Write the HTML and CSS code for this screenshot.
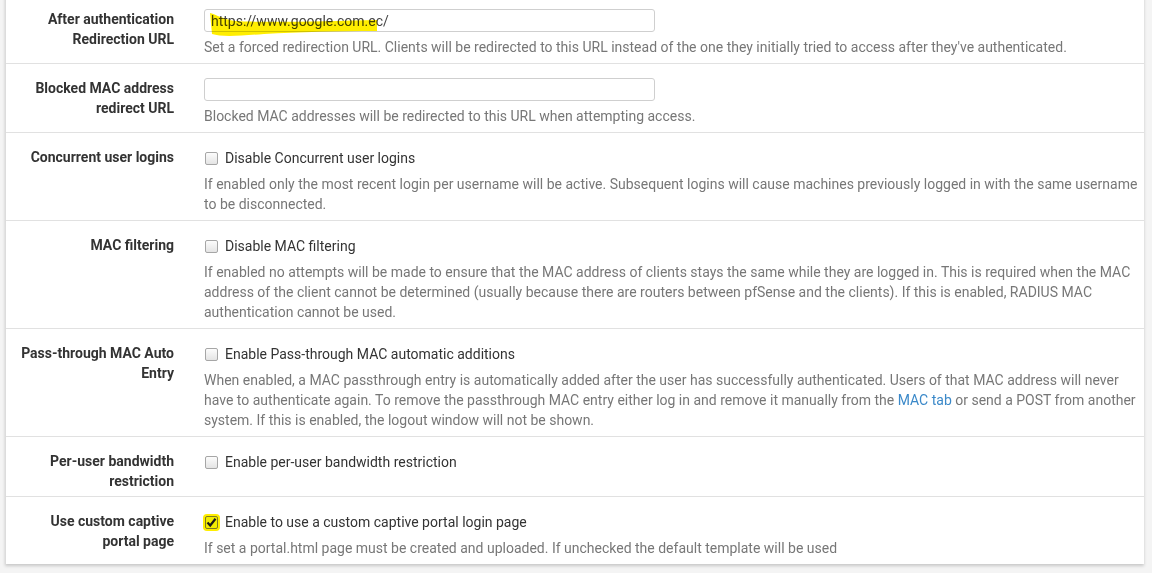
FILE: index.html
```html
<!DOCTYPE html>
<html lang="en">
<head>
<meta charset="utf-8">
<title>Captive Portal settings</title>
<link rel="stylesheet" href="styles.css">
</head>
<body>
<div class="panel">
  <div class="row">
    <div class="label">After authentication Redirection URL</div>
    <div class="control">
      <div class="input-wrap">
        <input class="text-input" type="text" value="https://www.google.com.ec/">
        <svg class="marker" width="180" height="30" viewBox="0 0 180 30" aria-hidden="true">
          <path d="M1 0 C 8 2, 14 6, 26 8 C 60 10, 120 8, 168 7 L 168 18 C 130 18, 90 19, 55 21 C 30 23, 12 24, 3 21 Z" fill="#ffee00"/>
        </svg>
      </div>
      <div class="help">Set a forced redirection URL. Clients will be redirected to this URL instead of the one they initially tried to access after they've authenticated.</div>
    </div>
  </div>
  <div class="row">
    <div class="label">Blocked MAC address redirect URL</div>
    <div class="control">
      <div class="input-wrap"><input class="text-input" type="text" value=""></div>
      <div class="help">Blocked MAC addresses will be redirected to this URL when attempting access.</div>
    </div>
  </div>
  <div class="row">
    <div class="label">Concurrent user logins</div>
    <div class="control">
      <label class="check"><span class="box"></span>Disable Concurrent user logins</label>
      <div class="help">If enabled only the most recent login per username will be active. Subsequent logins will cause machines previously logged in with the same username to be disconnected.</div>
    </div>
  </div>
  <div class="row">
    <div class="label">MAC filtering</div>
    <div class="control">
      <label class="check"><span class="box"></span>Disable MAC filtering</label>
      <div class="help">If enabled no attempts will be made to ensure that the MAC address of clients stays the same while they are logged in. This is required when the MAC address of the client cannot be determined (usually because there are routers between pfSense and the clients). If this is enabled, RADIUS MAC authentication cannot be used.</div>
    </div>
  </div>
  <div class="row">
    <div class="label">Pass-through MAC Auto Entry</div>
    <div class="control">
      <label class="check"><span class="box"></span>Enable Pass-through MAC automatic additions</label>
      <div class="help">When enabled, a MAC passthrough entry is automatically added after the user has successfully authenticated. Users of that MAC address will never have to authenticate again. To remove the passthrough MAC entry either log in and remove it manually from the <a href="#">MAC tab</a> or send a POST from another system. If this is enabled, the logout window will not be shown.</div>
    </div>
  </div>
  <div class="row">
    <div class="label">Per-user bandwidth restriction</div>
    <div class="control">
      <label class="check"><span class="box"></span>Enable per-user bandwidth restriction</label>
    </div>
  </div>
  <div class="row">
    <div class="label">Use custom captive portal page</div>
    <div class="control">
      <label class="check"><span class="box checked"><svg width="11" height="11" viewBox="0 0 11 11"><path d="M1.5 5.5 L4.2 8.5 L9.5 1.8" fill="none" stroke="#1a1a1a" stroke-width="2.2"/></svg></span>Enable to use a custom captive portal login page</label>
      <div class="help">If set a portal.html page must be created and uploaded. If unchecked the default template will be used</div>
    </div>
  </div>
</div>
</body>
</html>
```

FILE: styles.css
```css
html, body {
  margin: 0;
  padding: 0;
  background: #f4f4f4;
}
body {
  font-family: Roboto, "Liberation Sans", Arial, sans-serif;
  font-size: 14px;
  line-height: 20px;
  color: #333;
  padding: 0 8px 0 5px;
  overflow: hidden;
  height: 573px;
}
.panel {
  background: #fff;
  border-left: 1px solid #dcdcdc;
  margin-top: -5px;
  box-shadow: 0 2px 3px rgba(0, 0, 0, 0.18);
}
.row {
  display: grid;
  grid-template-columns: 183px 1fr;
  border-top: 1px solid #e1e1e1;
}
.row:first-child {
  border-top: none;
}
.label {
  font-weight: 700;
  color: #333;
  text-align: right;
  padding: 14px 15px 5px 6px;
}
.control {
  padding: 14px 4px 0 15px;
}
.input-wrap {
  position: relative;
  height: 23px;
}
.text-input {
  box-sizing: border-box;
  width: 451px;
  height: 23px;
  margin: 0;
  border: 1px solid #cfcfcf;
  border-radius: 3px;
  padding: 0 6px;
  font-family: Roboto, "Liberation Sans", Arial, sans-serif;
  font-size: 14px;
  color: #444;
  background: #fff;
  outline: none;
}
.marker {
  position: absolute;
  left: 5px;
  top: 4px;
  mix-blend-mode: multiply;
  pointer-events: none;
}
.help {
  color: #777;
  margin: 5px 0 6px;
}
.help a {
  color: #3b89c9;
  text-decoration: none;
}
.check {
  display: flex;
  align-items: center;
  height: 22px;
  color: #333;
}
.box {
  box-sizing: border-box;
  width: 13px;
  height: 13px;
  border: 1px solid #a6a6a6;
  border-radius: 2px;
  background: linear-gradient(#fcfcfc, #e4e4e4);
  margin: 0 7px 0 1px;
  display: flex;
  align-items: center;
  justify-content: center;
  flex: none;
}
.box.checked {
  background: #f2ec00;
  border-color: #7f7a20;
  box-shadow: 0 0 0 2px #ffee00;
}
.box svg {
  display: block;
}
```
